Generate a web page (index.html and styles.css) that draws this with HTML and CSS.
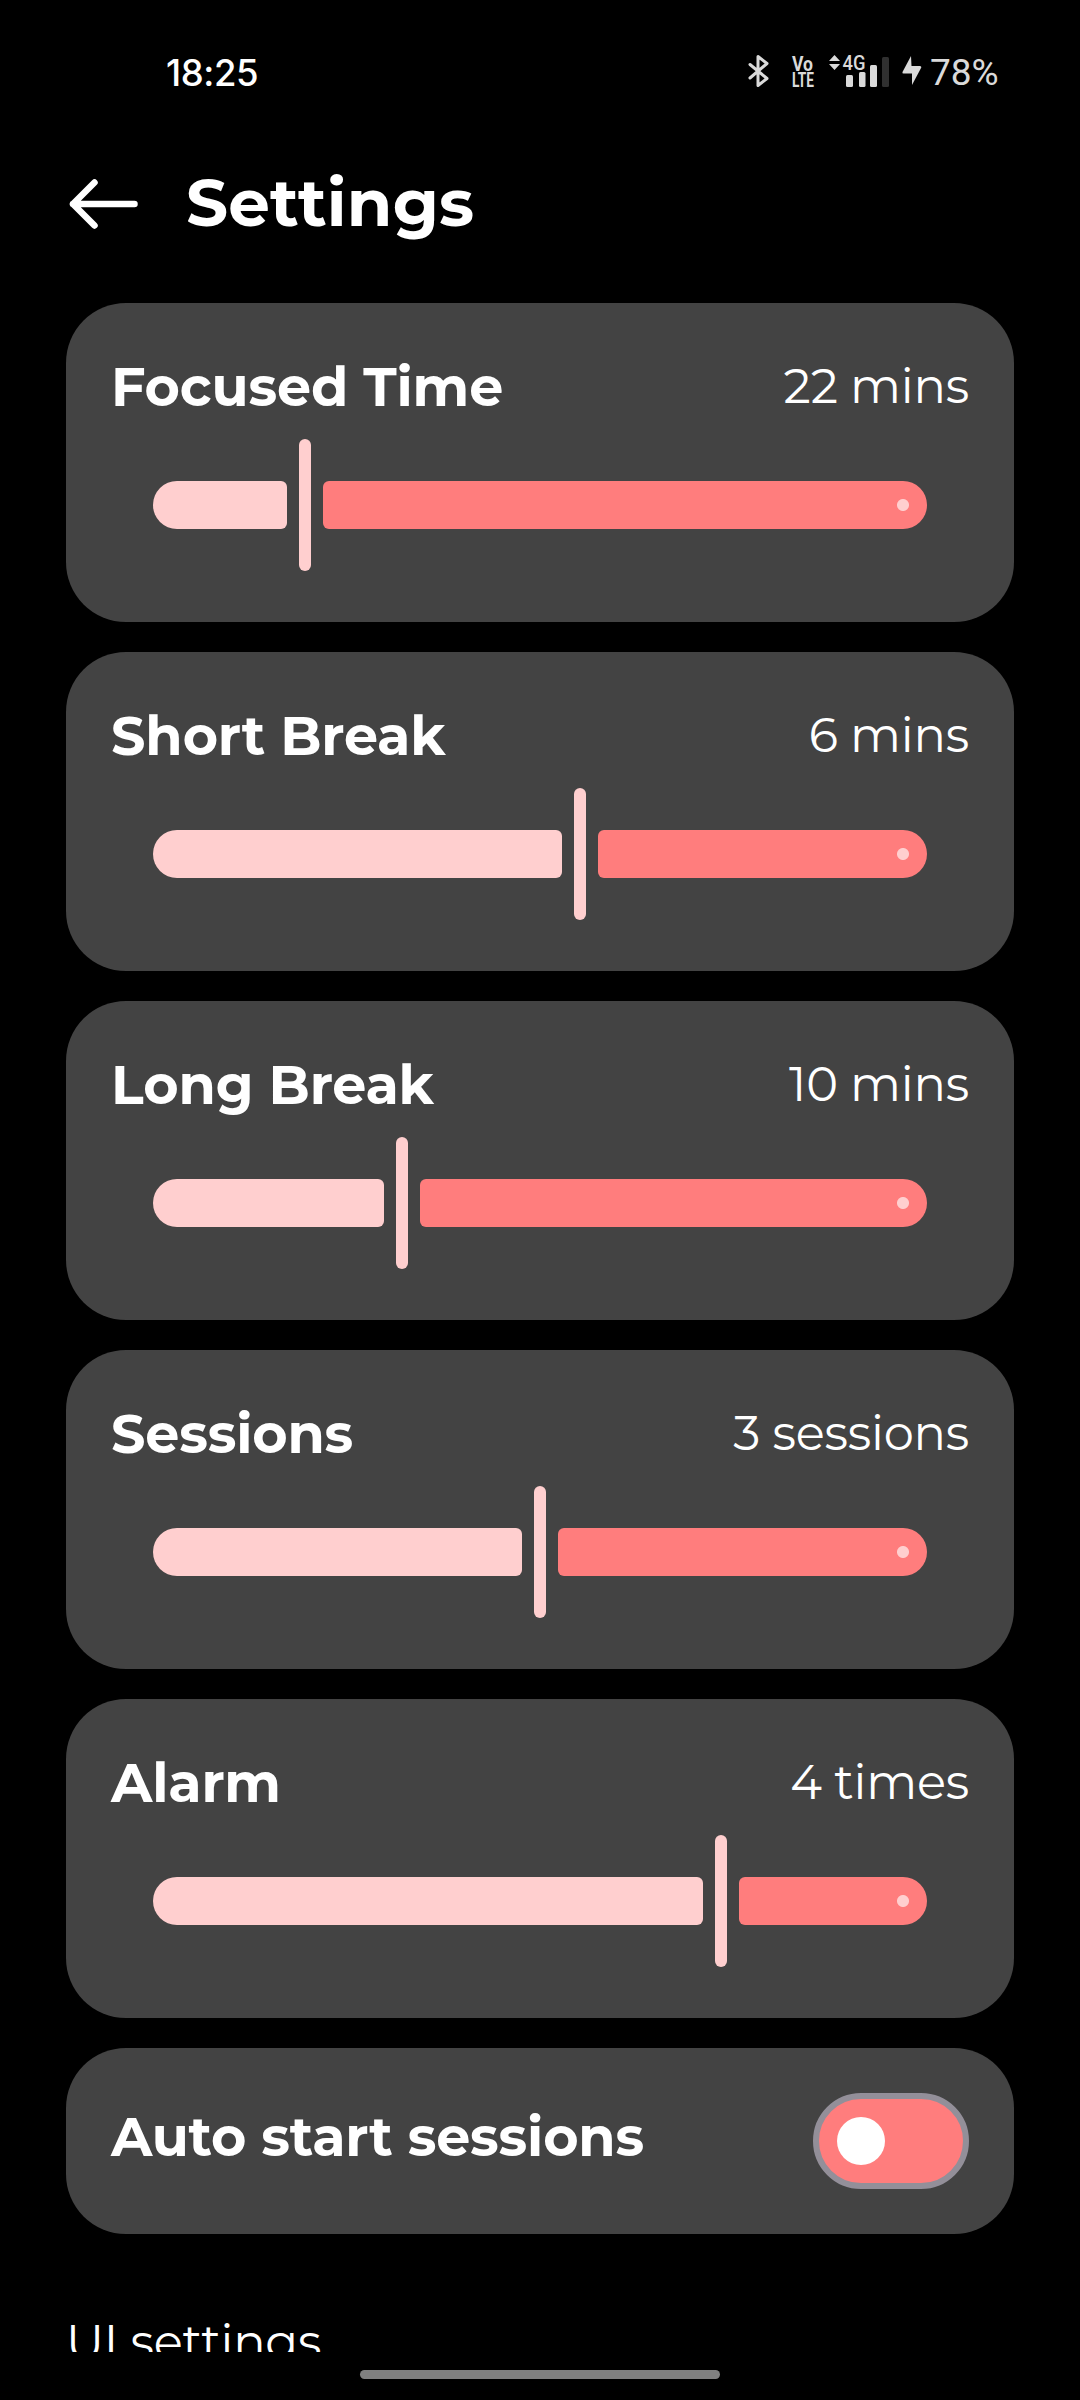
FILE: index.html
```html
<!DOCTYPE html>
<html lang="en">
<head>
<meta charset="utf-8">
<title>Settings</title>
<link rel="stylesheet" href="styles.css">
</head>
<body>
<div class="screen">
  <header class="status">
    <span class="clock">18:25</span>
    <div class="indicators">
      <svg class="bt" width="22" height="34" viewBox="0 0 22 34" fill="none" stroke="#dadada" stroke-width="3" stroke-linejoin="round" stroke-linecap="round"><path d="M3 10.500 L20 24.500 L11 31.500 V2.500 L20 9.500 L3 24"/></svg>
      <svg class="volte" width="22" height="34" viewBox="0 0 22 34"><text class="tiny" x="0" y="16.500" textLength="21" lengthAdjust="spacingAndGlyphs">Vo</text><text class="tiny" x="0" y="32.500" textLength="22" lengthAdjust="spacingAndGlyphs">LTE</text></svg>
      <svg class="signal" width="62" height="34" viewBox="0 0 62 34"><g fill="#dadada"><path d="M0 7 L5.500 1 L11 7Z M0 10 L11 10 L5.500 16Z"/><rect x="17" y="21" width="7" height="12" rx="1.500"/><rect x="30" y="18" width="6.500" height="15" rx="1.500"/><rect x="41" y="11" width="7" height="22" rx="1.500"/></g><rect x="53" y="3" width="7" height="30" rx="1.500" fill="#303030"/><text class="net" x="13.500" y="16" textLength="23" lengthAdjust="spacingAndGlyphs">4G</text></svg>
      <svg class="bolt" width="20" height="32" viewBox="0 0 20 32"><path d="M9 1 L0.500 17 Q0 18.500 1.500 18.500 H10 V30 L19.300 12.500 Q19.500 11 18 11 H9.500Z" fill="#dadada"/></svg>
      <span class="battery">78%</span>
    </div>
  </header>
  <div class="topbar">
    <svg class="back" width="70" height="50" viewBox="0 0 70 50" fill="none" stroke="#fff" stroke-width="6.500" stroke-linecap="round" stroke-linejoin="round"><path d="M65.500 25 H4 M25.500 3.500 L4 25 L25.500 46.500"/></svg>
    <h1 class="heading">Settings</h1>
  </div>
  <main class="content">
    <section class="card"><div class="row"><h2 class="title">Focused Time</h2><span class="value">22 mins</span></div>
      <div class="slider"><i class="active" style="width:134px"></i><i class="thumb"></i><i class="rest"></i></div></section>
    <section class="card"><div class="row"><h2 class="title">Short Break</h2><span class="value">6 mins</span></div>
      <div class="slider"><i class="active" style="width:409.3px"></i><i class="thumb"></i><i class="rest"></i></div></section>
    <section class="card"><div class="row"><h2 class="title">Long Break</h2><span class="value">10 mins</span></div>
      <div class="slider"><i class="active" style="width:231.400px"></i><i class="thumb"></i><i class="rest"></i></div></section>
    <section class="card"><div class="row"><h2 class="title">Sessions</h2><span class="value">3 sessions</span></div>
      <div class="slider"><i class="active" style="width:369px"></i><i class="thumb"></i><i class="rest"></i></div></section>
    <section class="card"><div class="row"><h2 class="title">Alarm</h2><span class="value">4 times</span></div>
      <div class="slider"><i class="active" style="width:550.3px"></i><i class="thumb"></i><i class="rest"></i></div></section>
    <section class="card toggle-card"><h2 class="title">Auto start sessions</h2><span class="switch"><i class="knob"></i></span></section>
    <h3 class="group">UI settings</h3>
  </main>
  <footer class="nav"><i class="handle"></i></footer>
</div>
</body>
</html>
```
FILE: styles.css
```css
* { box-sizing: border-box; }
body { margin: 0; background: #000; color: #fff; font-family: Montserrat, Inter, sans-serif; }
i { display: block; font-style: normal; }
h1, h2, h3 { margin: 0; }
.screen { width: 1080px; height: 2400px; display: flex; flex-direction: column; overflow: hidden; background: #000; }
.status { height: 144px; padding: 0 0 0 166px; display: flex; justify-content: space-between; align-items: center; font-family: Inter, sans-serif; }
.clock { margin-top: 2px; font-size: 36.5px; line-height: 44px; font-weight: 500; letter-spacing: -0.4px; }
.indicators { width: 333px; display: flex; align-items: center; color: #dadada; }
.bt, .volte, .signal, .bolt { flex: none; margin-top: -2px; overflow: visible; }
.volte { margin-left: 23px; }
.signal { margin-left: 15px; }
.bolt { margin-left: 11px; }
.tiny { font: 700 20px Roboto, sans-serif; fill: #dadada; }
.net { font: 500 21px Roboto, sans-serif; fill: #dadada; }
.battery { margin: 2px 0 0 8px; font: 400 37px/44px Roboto, sans-serif; }
.topbar { height: 159px; padding: 1px 69px 0; display: flex; align-items: flex-start; gap: 47px; }
.back { margin-top: 34px; }
.heading { font-size: 66px; line-height: 116px; font-weight: 700; letter-spacing: 0.1px; }
.content { height: 2049px; padding: 0 66px; overflow: hidden; display: flex; flex-direction: column; gap: 30px; }
.card { flex: none; height: 319px; border-radius: 60px; background: #434343; padding: 45px 45px 0; }
.row { display: flex; justify-content: space-between; height: 78px; }
.title { font-size: 54px; line-height: 78px; font-weight: 700; letter-spacing: -0.17px; white-space: nowrap; }
.value { font-size: 48px; line-height: 76px; font-weight: 400; letter-spacing: -0.2px; }
.slider { margin: 13px 42px 0; height: 132px; display: flex; align-items: center; gap: 12px; }
.active { height: 48px; border-radius: 24px 6px 6px 24px; background: #ffcfcf; }
.thumb { width: 12px; height: 132px; border-radius: 6px; background: #ffcfcf; }
.rest { flex: 1; height: 48px; border-radius: 6px 24px 24px 6px; background: radial-gradient(circle at calc(100% - 24px) 50%, #ffcfcf 5.5px, #ff7d7d 6.5px); }
.toggle-card { height: 186px; padding: 0 45px; display: flex; justify-content: space-between; align-items: center; }
.toggle-card .title { margin-bottom: 8px; }
.switch { width: 156px; height: 96px; border: 6px solid #938f99; border-radius: 48px; background: #ff7d7d; padding: 18px; }
.knob { width: 48px; height: 48px; border-radius: 50%; background: #fff; }
.group { margin-top: 40px; font-size: 48px; line-height: 76px; font-weight: 400; letter-spacing: -0.2px; }
.nav { height: 48px; display: flex; justify-content: center; padding-top: 18px; }
.handle { width: 360px; height: 9px; border-radius: 5px; background: #808080; }
```
